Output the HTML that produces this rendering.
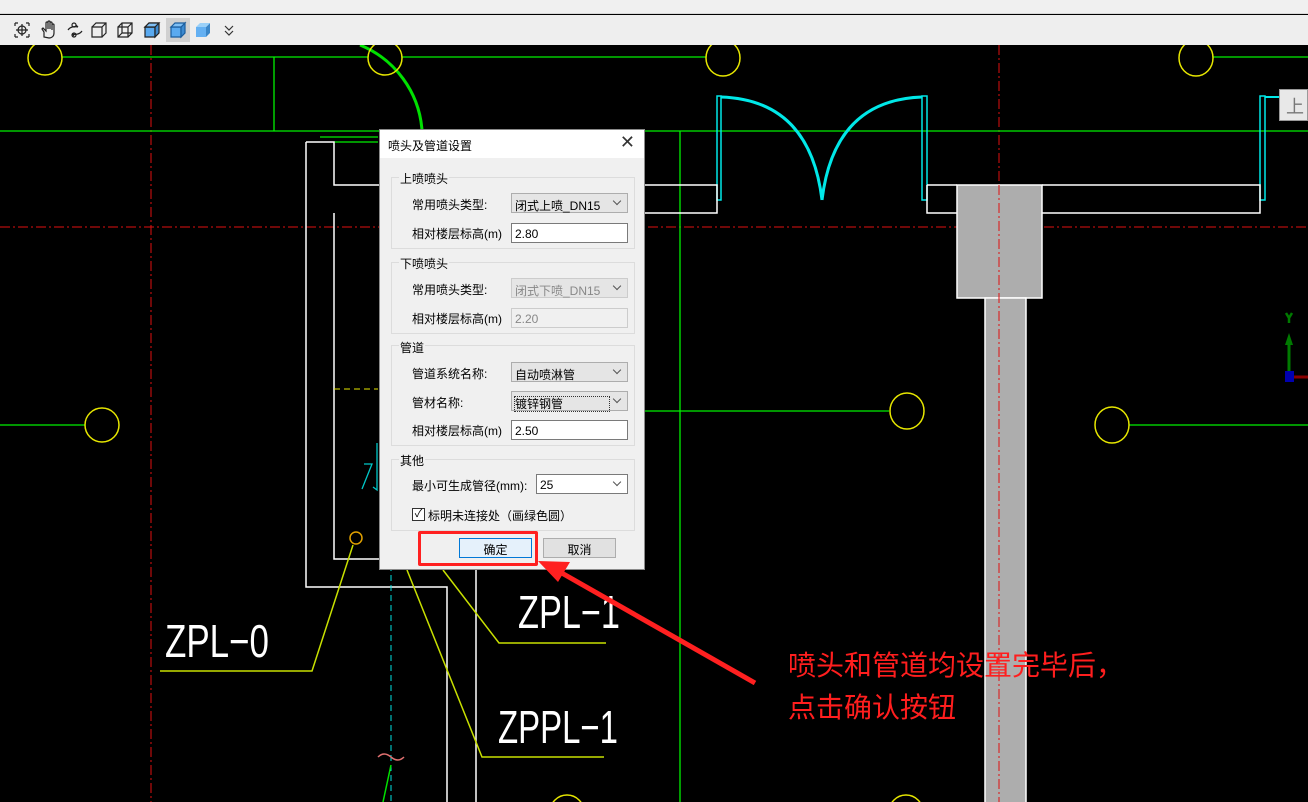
<!DOCTYPE html>
<html><head><meta charset="utf-8"><style>
*{margin:0;padding:0;box-sizing:border-box}
body{width:1308px;height:802px;overflow:hidden;background:#000;position:relative;font-family:"Liberation Sans","Noto Sans CJK SC",sans-serif}
.top{position:absolute;left:0;top:0;width:1308px;height:14px;background:#f0f0f0;border-bottom:1px solid #d8d8d8}
.tb{position:absolute;left:0;top:15px;width:1308px;height:30px;background:#eeeeee}
svg.cad{position:absolute;left:0;top:0}
.dlg{position:absolute;left:379px;top:129px;width:266px;height:441px;background:#f0f0f0;border:1px solid #8a8a8a;font-size:12px;color:#000}
.title{position:absolute;left:0;top:0;width:264px;height:28px;background:#fff;font-size:12px}
.title span{position:absolute;left:8px;top:7px}
.title i{position:absolute;right:9px;top:2px;font-style:normal;font-size:18px;color:#333}
.grp{position:absolute;left:11px;width:244px;border:1px solid #dcdcdc}
.gl{position:absolute;left:19px;background:#f0f0f0;padding:0 1px;font-size:12px}
.lb{position:absolute;left:32px;font-size:12px}
.cb{position:absolute;left:131px;width:117px;height:20px;background:#e5e5e5;border:1px solid #adadad;font-size:12px;padding:3px 0 0 3px}
.cb:after{content:"";position:absolute;right:7px;top:4px;width:5px;height:5px;border-right:1px solid #555;border-bottom:1px solid #555;transform:rotate(45deg)}
.in{position:absolute;left:131px;width:117px;height:20px;background:#fff;border:1px solid #7a7a7a;font-size:12px;padding:3px 0 0 3px}
.btn{position:absolute;top:408px;width:73px;height:20px;background:#e1e1e1;border:1px solid #adadad;text-align:center;font-size:12px;padding-top:2px}
.note{position:absolute;left:788px;color:#ff1e1e;font-size:28px;font-family:"Noto Sans CJK SC",sans-serif;line-height:1}
</style></head><body>
<svg class="cad" width="1308" height="802" viewBox="0 0 1308 802">
<g fill="none" stroke-width="1">
<path d="M151 45V802M999 45V802" stroke="#e01010" stroke-dasharray="10,3,2,3"/>
<path d="M0 227H1308" stroke="#e01010" stroke-dasharray="10,3,2,3"/>
<path d="M62 57H368M402 57H706M1213 57H1308M0 131H1308M274 57V131M680 131V802M645 411H889M0 425H85M1129 425H1308M320 137H378M334 142H378" stroke="#00f000" stroke-width="1.3"/>
<path d="M360 45 A100 100 0 0 1 422 130" stroke="#00e000" stroke-width="3"/>
<g stroke="#e6e600" stroke-width="1.5">
<ellipse cx="45" cy="58" rx="17" ry="17"/><ellipse cx="385" cy="58" rx="17" ry="17"/>
<ellipse cx="723" cy="58" rx="17" ry="18"/><ellipse cx="1196" cy="58" rx="17" ry="18"/>
<ellipse cx="102" cy="425" rx="17" ry="17"/><ellipse cx="907" cy="411" rx="17" ry="18"/>
<ellipse cx="1112" cy="425" rx="17" ry="18"/><ellipse cx="567" cy="812" rx="17" ry="17"/><ellipse cx="906" cy="812" rx="17" ry="17"/>
</g>
<g stroke="#00e8e8" stroke-width="1.5">
<rect x="717" y="96" width="4" height="104"/><rect x="922" y="96" width="5" height="104"/><rect x="1260" y="96" width="5" height="104"/>
<path d="M721 97 Q810 100 822 200" stroke-width="3"/><path d="M922 97 Q834 100 822 200" stroke-width="3"/>
<path d="M1265 97H1279" stroke-width="2"/>
</g>
<g stroke="#fff" stroke-width="1.5">
<path d="M640 185H717V213H640M927 185H957M1042 185H1260V213H1042M927 185V213H957"/>
<path d="M306 142V587H447V802M306 142H334V185H380M334 213V559H380M476 570V802"/>
</g>
<path d="M334 389H378" stroke="#e6e600" stroke-dasharray="6,4"/>
<rect x="957" y="185" width="85" height="113" fill="#adadad" stroke="#fff" stroke-width="1.5"/>
<rect x="985" y="298" width="41" height="510" fill="#adadad" stroke="#fff" stroke-width="1.5"/>
<path d="M999 185V802" stroke="#e01010" stroke-dasharray="10,3,2,3"/>
<path d="M391 565V802" stroke="#00e0e0" stroke-dasharray="6,4"/>
<circle cx="356" cy="538" r="6" stroke="#e0a000" stroke-width="1.5"/>
<path d="M353 545L312 671H160M407 570L482 757H604M443 570L499 643H606" stroke="#c8e000" stroke-width="1.5"/>
<path d="M378 757q6 -6 13 0t13 0" stroke="#e07070" stroke-width="1.5"/>
<path d="M391 765L383 802" stroke="#00e000" stroke-width="1.5"/>
<path d="M377 443V490L373 487M364 464H372L362 489" stroke="#00c8c8" stroke-width="1.3"/>
<path d="M1289 375V340" stroke="#007a00" stroke-width="3"/><path d="M1285 345L1289 333L1293 345Z" fill="#007a00"/>
<path d="M1286 313L1289 318L1292 313M1289 318V323" stroke="#007a00" stroke-width="2.5"/>
<path d="M1294 377H1308" stroke="#8a0000" stroke-width="3"/>
<rect x="1285" y="371" width="9" height="11" fill="#0000b0"/>
</g>
<g fill="#fff" font-family="Liberation Sans" font-size="46">
<text x="165" y="657" textLength="104" lengthAdjust="spacingAndGlyphs">ZPL−0</text>
<text x="518" y="628" textLength="102" lengthAdjust="spacingAndGlyphs">ZPL−1</text>
<text x="498" y="743" textLength="120" lengthAdjust="spacingAndGlyphs">ZPPL−1</text>
</g>
</svg>
<div class="top"></div>
<div class="tb">
<svg width="250" height="30" viewBox="0 0 250 30">
<g fill="none" stroke="#222" stroke-width="1.2">
<path d="M15 8h3M15 8v3M29 8h-3M29 8v3M15 22h3M15 22v-3M29 22h-3M29 22v-3"/><circle cx="22" cy="15" r="4"/><path d="M22 9v12M16 15h12"/>
<path d="M44 22v-5l-2-3 1-1 3 3v-8a1 1 0 012 0v6-7a1 1 0 012 0v7-6a1 1 0 012 0v7-5a1 1 0 012 0v8c0 3-2 5-5 5z"/>
<path d="M68 15c2-3 6-4 10-3M78 12l-2-2M82 16c-2 3-6 4-10 3M72 19l2 2"/><circle cx="74" cy="10" r="2"/><circle cx="74" cy="20" r="2"/>
<path d="M92 12h10v10h-10zM92 12l4-4h10v10l-4 4M102 12l4-4"/>
<path d="M118 12h10v10h-10zM118 12l4-4h10v10l-4 4M128 12l4-4M122 8v10h10M122 18l-4 4"/>
</g>
<rect x="166" y="3" width="24" height="24" fill="#d0d0d0"/>
<g stroke="#222" stroke-width="1.2"><path d="M145 12h10v10h-10z" fill="#5aaaf0"/><path d="M145 12l4-4h10v10l-4 4V12z" fill="#3d8ad0"/><path d="M145 12l4-4h10l-4 4z" fill="#80c0f5"/></g>
<g stroke="#1b5e9e" stroke-width="1.2"><path d="M171 12h10v10h-10z" fill="#5aaaf0"/><path d="M181 12l4-4v10l-4 4z" fill="#3d8ad0"/><path d="M171 12l4-4h10l-4 4z" fill="#80c0f5"/></g>
<path d="M196 12h10v10h-10z" fill="#64b0f2"/><path d="M206 12l4-4v10l-4 4z" fill="#3a86c8"/><path d="M196 12l4-4h10l-4 4z" fill="#9ad0f8"/>
<path d="M225 11l4 4 4-4M225 16l4 4 4-4" fill="none" stroke="#333" stroke-width="1.2"/>
</svg>
</div>
<div style="position:absolute;left:1279px;top:89px;width:29px;height:32px;background:#e8e8e8;border:1px solid #999;color:#777;font-size:18px;padding:3px 0 0 6px;font-family:'Noto Sans CJK SC'">上</div>

<div class="dlg">
<div class="title"><span>喷头及管道设置</span><i>✕</i></div>
<div class="grp" style="top:47px;height:72px"></div><div class="gl" style="top:40px">上喷喷头</div>
<div class="lb" style="top:66px">常用喷头类型:</div><div class="cb" style="top:63px">闭式上喷_DN15</div>
<div class="lb" style="top:95px">相对楼层标高(m)</div><div class="in" style="top:93px">2.80</div>
<div class="grp" style="top:132px;height:72px"></div><div class="gl" style="top:125px">下喷喷头</div>
<div class="lb" style="top:151px">常用喷头类型:</div><div class="cb" style="top:148px;color:#888;background:#e5e5e5;border-color:#ccc">闭式下喷_DN15</div>
<div class="lb" style="top:180px">相对楼层标高(m)</div><div class="in" style="top:178px;background:#f0f0f0;border-color:#ccc;color:#888">2.20</div>
<div class="grp" style="top:215px;height:101px"></div><div class="gl" style="top:209px">管道</div>
<div class="lb" style="top:235px">管道系统名称:</div><div class="cb" style="top:232px">自动喷淋管</div>
<div class="lb" style="top:264px">管材名称:</div><div class="cb" style="top:261px"><span style="outline:1px dotted #333;padding-right:46px">镀锌钢管</span></div>
<div class="lb" style="top:292px">相对楼层标高(m)</div><div class="in" style="top:290px">2.50</div>
<div class="grp" style="top:329px;height:72px"></div><div class="gl" style="top:322px">其他</div>
<div class="lb" style="top:347px">最小可生成管径(mm):</div><div class="cb" style="top:344px;left:156px;width:92px;background:#fff;border-color:#7a7a7a">25</div>
<div style="position:absolute;left:32px;top:378px;width:13px;height:13px;border:1px solid #333;background:#fff;font-size:11px;line-height:11px;text-align:center">✓</div>
<div class="lb" style="top:377px;left:48px">标明未连接处（画绿色圆）</div>
<div class="btn" style="left:79px;background:#e5f1fb;border-color:#0078d7">确定</div>
<div class="btn" style="left:163px">取消</div>
</div>
<div style="position:absolute;left:418px;top:531px;width:120px;height:35px;border:3px solid #ff2020;border-radius:2px"></div>
<svg style="position:absolute;left:0;top:0" width="1308" height="802"><path d="M755 683L560 572" stroke="#ff2020" stroke-width="5"/><path d="M538 561L570 562L558 582Z" fill="#ff2020"/></svg>
<div class="note" style="top:650px">喷头和管道均设置完毕后，</div>
<div class="note" style="top:692px">点击确认按钮</div>
</body></html>
